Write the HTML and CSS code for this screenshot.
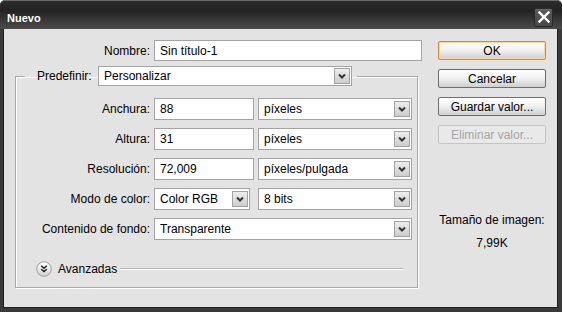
FILE: index.html
```html
<!DOCTYPE html>
<html lang="es">
<head>
    <meta charset="UTF-8">
    <meta name="viewport" content="width=device-width, initial-scale=1.0">
    <title>Nuevo</title>
    <link rel="stylesheet" href="styles.css">
</head>
<body>

    <div class="window">
        <div class="titlebar">
            <span class="title">Nuevo</span>
            <button class="close" type="button">
                <svg width="12" height="12" viewBox="0 0 12 12">
                    <path d="M1.5 1.5 L10.5 10.5 M10.5 1.5 L1.5 10.5" stroke="#fff" stroke-width="2.4" stroke-linecap="square"/>
                </svg>
            </button>
        </div>

        <div class="panel">
            <form class="form">
                <div class="name-row">
                    <label class="label name-label" for="name">Nombre:</label>
                    <input class="field name-field" id="name" type="text" value="Sin título-1">
                </div>

                <fieldset class="group">
                    <legend class="preset">
                        <span class="label">Predefinir:</span>
                        <div class="select preset-select">
                            <span class="select-text">Personalizar</span>
                            <span class="arrow"><svg width="14" height="14" viewBox="0 0 14 14"><path d="M4 5.5 L7 8.5 L10 5.5" fill="none" stroke="#333" stroke-width="2"/></svg></span>
                        </div>
                    </legend>

                    <div class="rows">
                        <div class="row">
                            <label class="label" for="width">Anchura:</label>
                            <input class="field num" id="width" type="text" value="88">
                            <div class="select unit">
                                <span class="select-text">píxeles</span>
                                <span class="arrow"><svg width="14" height="14" viewBox="0 0 14 14"><path d="M4 5.5 L7 8.5 L10 5.5" fill="none" stroke="#333" stroke-width="2"/></svg></span>
                            </div>
                        </div>
                        <div class="row">
                            <label class="label" for="height">Altura:</label>
                            <input class="field num" id="height" type="text" value="31">
                            <div class="select unit">
                                <span class="select-text">píxeles</span>
                                <span class="arrow"><svg width="14" height="14" viewBox="0 0 14 14"><path d="M4 5.5 L7 8.5 L10 5.5" fill="none" stroke="#333" stroke-width="2"/></svg></span>
                            </div>
                        </div>
                        <div class="row">
                            <label class="label" for="res">Resolución:</label>
                            <input class="field num" id="res" type="text" value="72,009">
                            <div class="select unit">
                                <span class="select-text">píxeles/pulgada</span>
                                <span class="arrow"><svg width="14" height="14" viewBox="0 0 14 14"><path d="M4 5.5 L7 8.5 L10 5.5" fill="none" stroke="#333" stroke-width="2"/></svg></span>
                            </div>
                        </div>
                        <div class="row">
                            <span class="label">Modo de color:</span>
                            <div class="select mode">
                                <span class="select-text">Color RGB</span>
                                <span class="arrow"><svg width="14" height="14" viewBox="0 0 14 14"><path d="M4 5.5 L7 8.5 L10 5.5" fill="none" stroke="#333" stroke-width="2"/></svg></span>
                            </div>
                            <div class="select unit">
                                <span class="select-text">8 bits</span>
                                <span class="arrow"><svg width="14" height="14" viewBox="0 0 14 14"><path d="M4 5.5 L7 8.5 L10 5.5" fill="none" stroke="#333" stroke-width="2"/></svg></span>
                            </div>
                        </div>
                        <div class="row">
                            <span class="label">Contenido de fondo:</span>
                            <div class="select wide">
                                <span class="select-text">Transparente</span>
                                <span class="arrow"><svg width="14" height="14" viewBox="0 0 14 14"><path d="M4 5.5 L7 8.5 L10 5.5" fill="none" stroke="#333" stroke-width="2"/></svg></span>
                            </div>
                        </div>
                    </div>

                    <div class="advanced">
                        <svg class="adv-icon" width="16" height="16" viewBox="0 0 16 16">
                            <defs>
                                <linearGradient id="bola" x1="0" y1="0" x2="0" y2="1">
                                    <stop offset="0" stop-color="#ffffff"/>
                                    <stop offset="1" stop-color="#d2d2d2"/>
                                </linearGradient>
                            </defs>
                            <circle cx="8" cy="8" r="7.3" fill="url(#bola)" stroke="#9c9c9c" stroke-width="1"/>
                            <path d="M5.2 4.8 L8 7.2 L10.8 4.8 M5.2 8.2 L8 10.6 L10.8 8.2" fill="none" stroke="#222" stroke-width="1.5"/>
                        </svg>
                        <span class="adv-text">Avanzadas</span>
                        <span class="adv-line"></span>
                    </div>
                </fieldset>
            </form>

            <div class="side">
                <button class="btn btn-ok" type="button">OK</button>
                <button class="btn" type="button">Cancelar</button>
                <button class="btn" type="button">Guardar valor...</button>
                <button class="btn" type="button" disabled>Eliminar valor...</button>
                <div class="size-label">Tamaño de imagen:</div>
                <div class="size-value">7,99K</div>
            </div>
        </div>
    </div>

</body>
</html>
```

FILE: styles.css
```css
/* Estilos generales */
body {
    margin: 0;
    background-color: #ffffff;
    font-family: "Liberation Sans", Arial, sans-serif;
    font-size: 12px;
    color: #000;
}

/* Ventana */
.window {
    width: 562px;
    height: 312px;
    box-sizing: border-box;
    background-color: #3a3a3a;
    border-radius: 5px 5px 0 0;
    display: flex;
    flex-direction: column;
    overflow: hidden;
}

.titlebar {
    height: 29px;
    box-sizing: border-box;
    flex-shrink: 0;
    border-top: 1px solid #6c6c6c;
    border-radius: 5px 5px 0 0;
    background: linear-gradient(#2c2c2c 0%, #222 35%, #3a3a3a 70%, #4b4b4b 100%);
    display: flex;
    align-items: center;
    justify-content: space-between;
    padding: 0 9px 0 7px;
}

.title {
    color: #fff;
    font-weight: bold;
    font-size: 11px;
    margin-top: 5px;
}

.close {
    width: 19px;
    height: 19px;
    padding: 0;
    margin-top: 4px;
    border: 1px solid #2a2a2a;
    border-radius: 2px;
    background: linear-gradient(#5a5a5a, #474747);
    box-shadow: inset 0 1px 0 #6a6a6a;
    display: flex;
    align-items: center;
    justify-content: center;
}

/* Cuerpo del diálogo */
.panel {
    flex: 1;
    margin: 0 4px 4px 3px;
    border: 1px solid #1e1e1e;
    border-top: none;
    background-color: #e3e3e3;
    display: flex;
    padding-top: 11px;
}

.form {
    width: 418px;
    flex-shrink: 0;
    margin: 0;
}

.label {
    line-height: 20px;
    white-space: nowrap;
    flex-shrink: 0;
}

.name-row {
    display: flex;
    align-items: center;
    height: 21px;
}

.name-label {
    width: 146px;
    margin-right: 4px;
    text-align: right;
}

/* Campos de texto */
.field {
    box-sizing: border-box;
    height: 22px;
    margin: 0;
    padding: 0 5px;
    border: 1px solid #a3a3a3;
    background: #fff;
    font-family: inherit;
    font-size: 12px;
    color: #000;
    outline: none;
    flex-shrink: 0;
}

.name-field {
    width: 268px;
    height: 21px;
}

/* Grupo */
.group {
    margin: 5px 0 0 11px;
    padding: 12px 5px 10px 0;
    width: 403px;
    min-width: 0;
    box-sizing: border-box;
    border: 1px solid #a8a8a8;
    box-shadow: inset 1px 1px 0 #fff, 1px 1px 0 #fff;
}

.preset {
    display: flex;
    align-items: flex-start;
    padding: 0 5px 0 12px;
    margin-left: 9px;
}

.preset .label {
    width: 55px;
    margin-right: 6px;
}

.preset-select {
    width: 254px;
    margin-bottom: -3px;
}

/* Desplegables */
.select {
    box-sizing: border-box;
    height: 22px;
    flex-shrink: 0;
    border: 1px solid #a3a3a3;
    background: #fff;
    display: flex;
    align-items: center;
    justify-content: space-between;
    padding: 0 1px 0 5px;
}

.preset-select {
    height: 20px;
}

.select-text {
    white-space: nowrap;
}

.arrow {
    width: 16px;
    height: 16px;
    box-sizing: border-box;
    border: 1px solid #a2a2a2;
    background: linear-gradient(#eeeeee, #cdcdcd);
    display: flex;
    align-items: center;
    justify-content: center;
}

.rows {
    display: flex;
    flex-direction: column;
    gap: 8px;
}

.row {
    display: flex;
    align-items: center;
    height: 22px;
}

.row .label {
    width: 134px;
    margin-right: 4px;
    text-align: right;
}

.num {
    width: 100px;
    margin-right: 4px;
}

.unit {
    width: 154px;
}

.mode {
    width: 96px;
    margin-right: 8px;
}

.wide {
    width: 258px;
}

/* Avanzadas */
.advanced {
    display: flex;
    align-items: center;
    height: 16px;
    margin: 21px 9px 0 0;
    padding-left: 20px;
}

.adv-text {
    margin-left: 6px;
}

.adv-line {
    flex: 1;
    margin-left: 3px;
    border-top: 1px solid #b5b5b5;
    border-bottom: 1px solid #fff;
}

/* Columna derecha */
.side {
    width: 108px;
    margin-left: 16px;
    padding-top: 1px;
    display: flex;
    flex-direction: column;
    align-items: center;
}

.btn {
    width: 108px;
    height: 19px;
    margin-bottom: 9px;
    padding: 0;
    border: 1px solid #6e6e6e;
    border-radius: 2px;
    background: linear-gradient(#ffffff, #f2f2f2 45%, #cfcfcf);
    font-family: inherit;
    font-size: 12px;
    color: #000;
}

.btn-ok {
    border-color: #d98a2e;
    box-shadow: inset 0 0 0 1px #f7d7a6;
}

.btn:disabled {
    border-color: #c4c4c4;
    background: #e9e9e9;
    color: #a5a5a5;
}

.size-label {
    margin-top: 60px;
    line-height: 14px;
    white-space: nowrap;
}

.size-value {
    margin-top: 9px;
    line-height: 14px;
}
```
